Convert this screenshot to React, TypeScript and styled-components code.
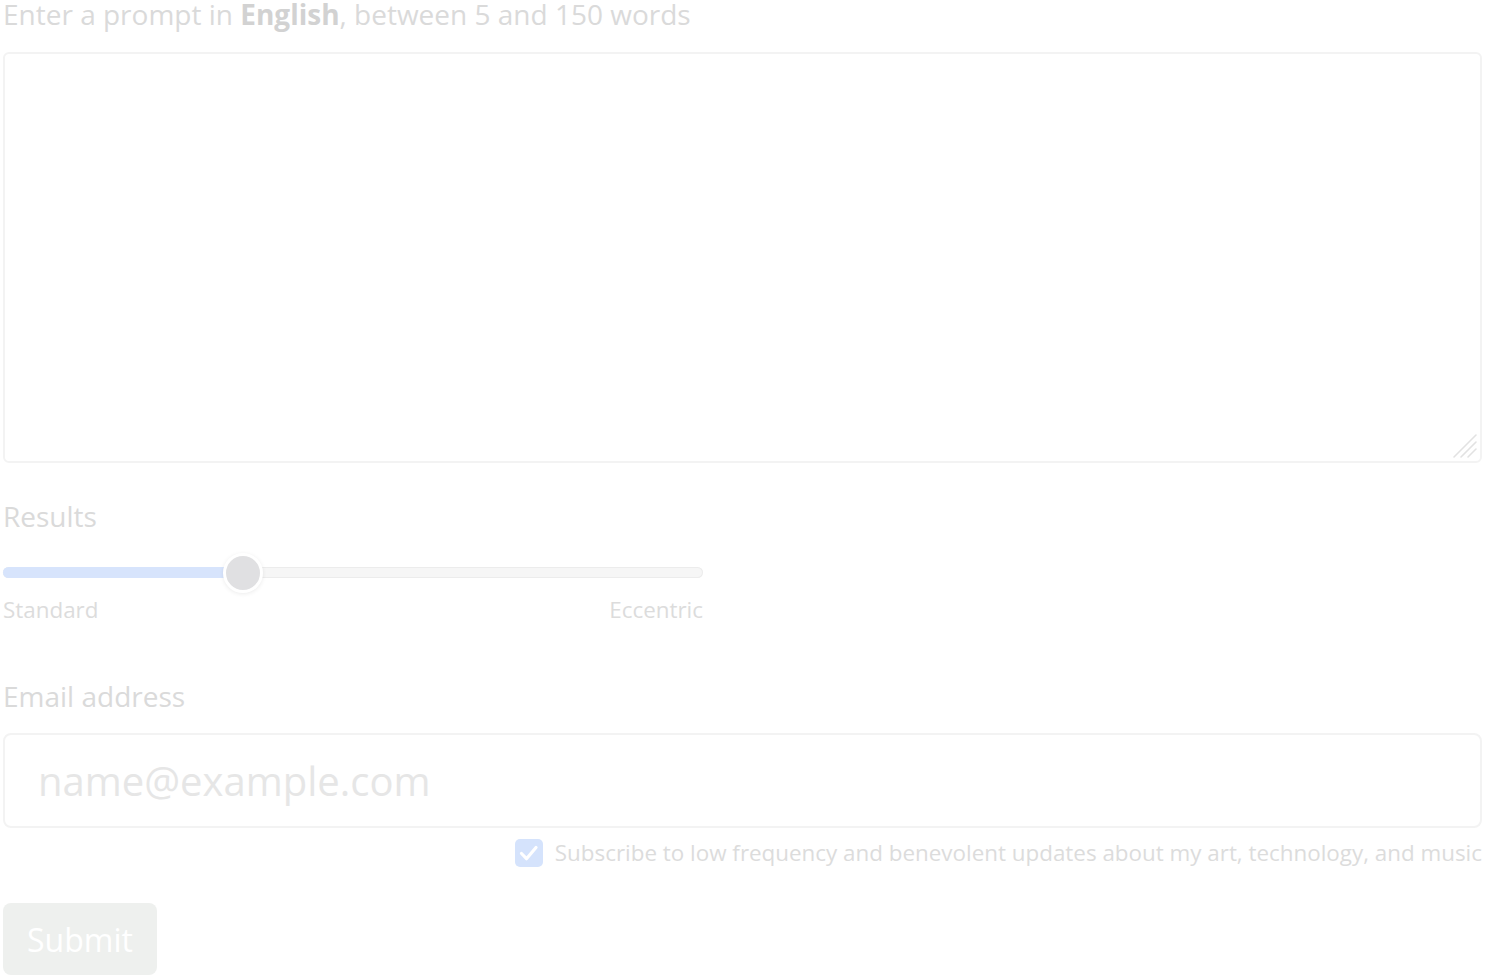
import styled, { createGlobalStyle } from "styled-components";

const GlobalStyle = createGlobalStyle`
    html, body {
        margin: 0;
        padding: 0;
        background: #fff;
    }
    body {
        font-family: "Open Sans", "Noto Sans", sans-serif;
    }
`;

const App = () => {
    const value = 34.3;

    return (
        <Form>
            <GlobalStyle />
            <Label>
                Enter a prompt in <strong>English</strong>, between 5 and 150 words
            </Label>
            <AreaWrap>
                <PromptArea />
                <Resizer width="26" height="26" viewBox="0 0 26 26">
                    <path d="M2 24L24 2M9 24L24 9M16 24L24 16" stroke="#e2e2e2" strokeWidth="1.6" strokeLinecap="round" />
                </Resizer>
            </AreaWrap>

            <Label $top={39}>Results</Label>
            <SliderBox>
                <Track>
                    <Fill style={{ width: `${value}%` }} />
                    <Thumb style={{ left: `${value}%` }} />
                </Track>
                <SliderLabels>
                    <span>Standard</span>
                    <span>Eccentric</span>
                </SliderLabels>
            </SliderBox>

            <Label $top={61}>Email address</Label>
            <EmailInput placeholder="name@example.com" />
            <CheckRow>
                <CheckBox>
                    <svg width="28" height="28" viewBox="0 0 28 28">
                        <path d="M6.5 14.5l5 5.2 9.5-11.2" fill="none" stroke="#fff" strokeWidth="3.2" strokeLinecap="round" strokeLinejoin="round" />
                    </svg>
                </CheckBox>
                Subscribe to low frequency and benevolent updates about my art, technology, and music
            </CheckRow>

            <SubmitButton>Submit</SubmitButton>
        </Form>
    );
};

export default App;

const Form = styled.div`
    width: 1479px;
    padding-left: 3px;
    display: flex;
    flex-direction: column;
`;

const Label = styled.div<{ $top?: number }>`
    margin-top: ${({ $top }) => $top ?? 0}px;
    font-size: 28px;
    line-height: 28px;
    color: #dadada;
    strong {
        font-weight: 700;
        color: #d2d2d2;
    }
`;

const AreaWrap = styled.div`
    position: relative;
    margin-top: 24px;
    height: 411px;
`;

const PromptArea = styled.textarea`
    display: block;
    box-sizing: border-box;
    width: 100%;
    height: 100%;
    border: 2px solid #f3f3f3;
    border-radius: 6px;
    resize: none;
    outline: none;
    background: #fff;
`;

const Resizer = styled.svg`
    position: absolute;
    right: 4px;
    bottom: 4px;
    pointer-events: none;
`;

const SliderBox = styled.div`
    width: 700px;
    margin-top: 37px;
`;

const Track = styled.div`
    position: relative;
    height: 11px;
    border-radius: 6px;
    background: #f6f6f6;
    box-shadow: inset 0 0 0 1px #ececec;
`;

const Fill = styled.div`
    height: 100%;
    border-radius: 6px 0 0 6px;
    background: #d7e4fc;
`;

const Thumb = styled.div`
    position: absolute;
    top: 50%;
    width: 34px;
    height: 34px;
    border-radius: 50%;
    background: #e0e0e2;
    border: 3px solid #fff;
    box-shadow: 0 1px 4px rgba(0, 0, 0, 0.08);
    transform: translate(-50%, -50%);
`;

const SliderLabels = styled.div`
    display: flex;
    justify-content: space-between;
    margin-top: 21px;
    font-size: 22.4px;
    line-height: 22px;
    color: #dcdcdc;
`;

const EmailInput = styled.input`
    box-sizing: border-box;
    margin-top: 23px;
    width: 100%;
    height: 95px;
    padding: 0 33px;
    border: 2px solid #f3f3f3;
    border-radius: 8px;
    outline: none;
    font-family: "Open Sans", sans-serif;
    font-size: 40px;
    &::placeholder {
        color: #e6e6e6;
    }
`;

const CheckRow = styled.label`
    display: flex;
    align-items: center;
    justify-content: flex-end;
    gap: 12px;
    margin-top: 11px;
    height: 28px;
    font-size: 22.4px;
    line-height: 28px;
    color: #dcdcdc;
`;

const CheckBox = styled.span`
    display: flex;
    align-items: center;
    justify-content: center;
    width: 28px;
    height: 28px;
    border-radius: 5px;
    background: #d5e3fc;
`;

const SubmitButton = styled.button`
    align-self: flex-start;
    margin-top: 36px;
    width: 154px;
    height: 72px;
    border: none;
    border-radius: 8px;
    background: #eef0ee;
    color: #fff;
    font-family: "Open Sans", sans-serif;
    font-size: 32px;
`;
